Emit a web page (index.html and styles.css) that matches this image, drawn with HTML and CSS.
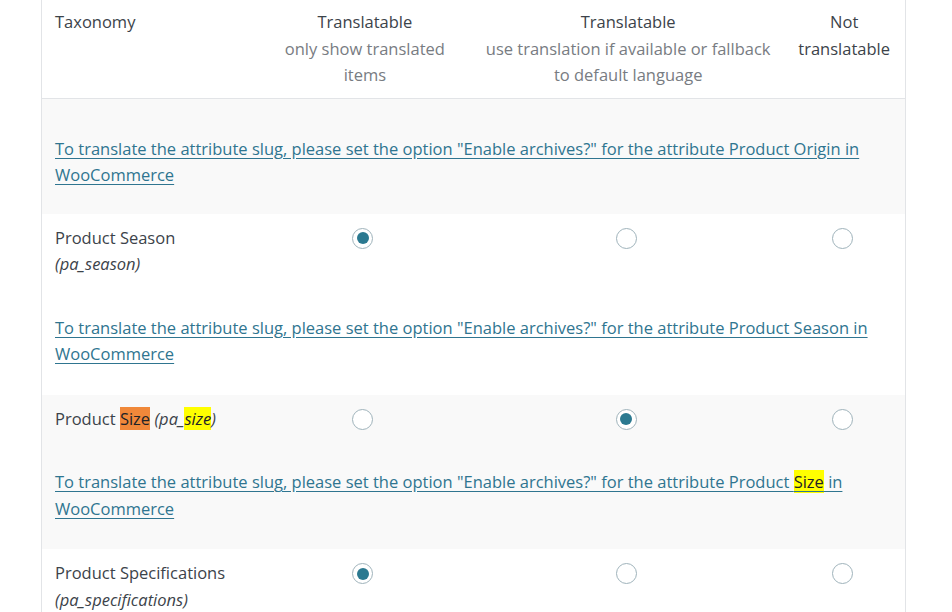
FILE: index.html
```html
<!DOCTYPE html>
<html lang="en">
<head>
<meta charset="utf-8">
<title>Taxonomies</title>
<link rel="stylesheet" href="styles.css">
</head>
<body>
<div class="wrap">
<table class="tax">
  <colgroup>
    <col class="c1"><col class="c2"><col class="c3"><col class="c4">
  </colgroup>
  <thead>
    <tr>
      <th class="name-h">Taxonomy</th>
      <th>Translatable<br><span class="sub">only show translated items</span></th>
      <th>Translatable<br><span class="sub">use translation if available or fallback to default language</span></th>
      <th>Not translatable</th>
    </tr>
  </thead>
  <tbody>
    <tr class="alt link-row first">
      <td colspan="4"><a href="#">To translate the attribute slug, please set the option "Enable archives?" for the attribute Product Origin in WooCommerce</a></td>
    </tr>
    <tr class="opt-row">
      <td class="name">Product Season<br><i>(pa_season)</i></td>
      <td><span class="radio on"></span></td>
      <td><span class="radio"></span></td>
      <td><span class="radio"></span></td>
    </tr>
    <tr class="link-row">
      <td colspan="4"><a href="#">To translate the attribute slug, please set the option "Enable archives?" for the attribute Product Season in WooCommerce</a></td>
    </tr>
    <tr class="alt opt-row">
      <td class="name">Product <mark class="hl-o">Size</mark> <i>(pa_<mark class="hl-y">size</mark>)</i></td>
      <td><span class="radio"></span></td>
      <td><span class="radio on"></span></td>
      <td><span class="radio"></span></td>
    </tr>
    <tr class="alt link-row">
      <td colspan="4"><a href="#">To translate the attribute slug, please set the option "Enable archives?" for the attribute Product <mark class="hl-y">Size</mark> in WooCommerce</a></td>
    </tr>
    <tr class="opt-row">
      <td class="name">Product Specifications<br><i>(pa_specifications)</i></td>
      <td><span class="radio on"></span></td>
      <td><span class="radio"></span></td>
      <td><span class="radio"></span></td>
    </tr>
  </tbody>
</table>
</div>
</body>
</html>
```
FILE: styles.css
```css
html, body {
  margin: 0;
  padding: 0;
  background: #fff;
}
body {
  font-family: "Open Sans", "Noto Sans", sans-serif;
  font-size: 16.5px;
  color: #3c434a;
}
.wrap {
  padding-left: 41px;
}
.tax {
  border-collapse: collapse;
  table-layout: fixed;
  width: 865px;
  border-left: 1px solid #e2e4e7;
  border-right: 1px solid #e2e4e7;
  line-height: 26.5px;
}
.c1 { width: 215px; }
.c2 { width: 216px; }
.c3 { width: 310px; }
.c4 { width: 122px; }
.tax th {
  font-weight: normal;
  text-align: center;
  vertical-align: top;
  padding: 9px 6px 9px;
  border-bottom: 1px solid #e2e4e7;
  color: #3c434a;
}
.tax th.name-h {
  text-align: left;
  padding-left: 13px;
}
.sub {
  color: #787c82;
}
.tax td {
  vertical-align: top;
  text-align: center;
  padding: 11px 13px 9px;
}
.tax td.name {
  text-align: left;
}
.alt td {
  background: #f9f9f9;
}
.link-row td {
  text-align: left;
  padding: 28px 13px 27px;
}
.link-row.first td {
  padding-top: 37px;
  padding-bottom: 25px;
}
.link-row a {
  color: #2f7590;
  text-decoration: underline;
  text-underline-offset: 3px;
}
mark {
  color: #1d2327;
  padding: 0;
}
.hl-o { background: #f0883a; }
.hl-y { background: #ffff00; }
.radio {
  display: inline-block;
  box-sizing: border-box;
  width: 21px;
  height: 21px;
  border: 1px solid #9fb3bb;
  border-radius: 50%;
  background: #fff;
  vertical-align: top;
  margin-top: 3px;
  margin-right: 4px;
  position: relative;
}
.radio.on::after {
  content: "";
  position: absolute;
  left: 3.5px;
  top: 3.5px;
  width: 12px;
  height: 12px;
  border-radius: 50%;
  background: #2b7990;
}
```
